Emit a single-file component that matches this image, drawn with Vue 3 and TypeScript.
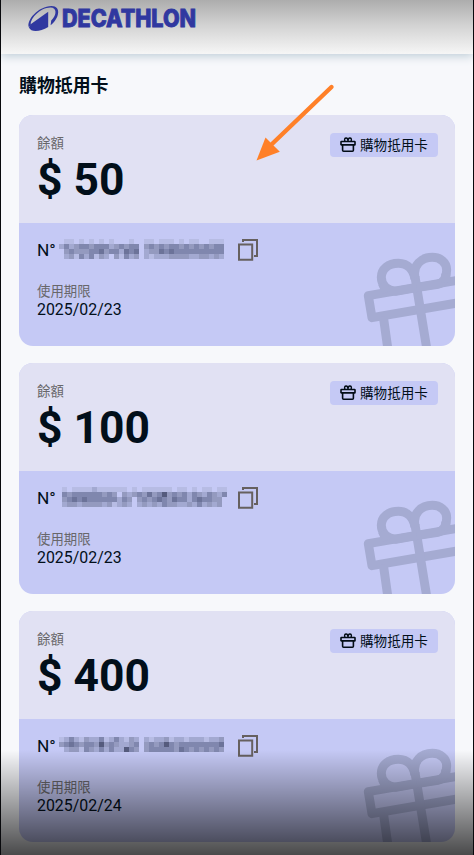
<script setup lang="ts">
interface Voucher {
  amount: string
  expiry: string
  shifted: boolean
  low: boolean
  tail: boolean
  mask: string[]
}

const vouchers: Voucher[] = [
  {
    amount: '$ 50',
    expiry: '2025/02/23',
    shifted: false,
    low: false,
    tail: true,
    mask: [
      '011010101010001001101110101100111',
      '242344344423434403434344343434344',
      '034333445344254502335454444444444',
      '023142413203142302122233332233232',
    ],
  },
  {
    amount: '$ 100',
    expiry: '2025/02/23',
    shifted: true,
    low: false,
    tail: false,
    mask: [
      '101111211111101011111101101011011',
      '434444443430323435346343424324324',
      '345454444442430343454354424544330',
      '233233332312320232324332232423230',
    ],
  },
  {
    amount: '$ 400',
    expiry: '2025/02/24',
    shifted: false,
    low: true,
    tail: false,
    mask: [
      '124213224124213202122312212221223',
      '345434436343223403434643444444445',
      '023314324242264303444443543434343',
    ],
  },
]

const shades = ['transparent', '#b7bce4', '#a3a9d1', '#949abf', '#8087ae', '#6c7399', '#555b7d']

function cells(mask: string[]) {
  return mask.flatMap((row, y) =>
    row.split('').map((level, x) => ({ x: x * 5, y: y * 5, fill: shades[Number(level)] })),
  )
}
</script>

<template>
  <div class="screen">
    <header class="topbar">
      <svg class="logo" width="200" height="40" viewBox="0 0 200 40">
        <g fill="#3038a0">
          <path d="M2.6 24.2L20.2 11.8V26.9C12 32 3 32.6 1 27.5Z" />
          <path
            d="M1 27.5C-2.2 20.5 10.5 6 23.5 6C33.5 6 31.6 18.5 22.6 25.2L23.2 20.6C29.5 14.6 28.6 7.5 22.5 7.6C12 7.8 2.6 18.3 2.8 24.2Z"
          />
          <text x="34" y="27" textLength="134" lengthAdjust="spacingAndGlyphs" class="wordmark">DECATHLON</text>
        </g>
      </svg>
    </header>

    <main class="content">
      <h1 class="title">購物抵用卡</h1>
      <article v-for="(v, i) in vouchers" :key="i" class="card">
        <div class="summary">
          <div class="balance">
            <span class="label">餘額</span>
            <strong class="amount">{{ v.amount }}</strong>
          </div>
          <div class="tag">
            <svg width="16" height="16" viewBox="0 0 16 16" fill="none" stroke="#020c16" stroke-width="1.6">
              <rect x="1" y="4.5" width="14" height="3.4" rx=".4" />
              <path d="M2.6 8V13.2Q2.6 14.2 3.6 14.2H12.4Q13.4 14.2 13.4 13.2V8" />
              <path d="M5.2 4.6C3.9 2.5 4.7 1 6.2 1C7.4 1 8 1.9 8 4.2C8 1.9 8.6 1 9.8 1C11.3 1 12.1 2.5 10.8 4.6" stroke-width="1.4" />
            </svg>
            <span>購物抵用卡</span>
          </div>
        </div>
        <div class="details">
          <svg class="gift" width="105" height="111" viewBox="0 0 315 333">
            <g fill="none" stroke="#a5abd2" stroke-width="27" stroke-linejoin="round">
              <path d="M340 133L55 182L66 248L340 201" />
              <path d="M100 245L114 345M195 125L231 345" />
              <path d="M200 158L137 169C108 165 94 148 94 127C94 102 115 85 145 85C175 85 191 108 195 132" />
              <path d="M200 158L264 148C281 142 290 125 290 105C290 81 270 67 247 67C215 67 187 90 195 128" />
              <path d="M97 145L110 172M287 115L288 143" />
            </g>
          </svg>
          <div class="number">
            <span class="prefix">N°</span>
            <svg class="mask" :class="{ shifted: v.shifted, low: v.low }" width="166" height="20" viewBox="0 0 166 20" shape-rendering="crispEdges">
              <path v-if="v.tail" d="M163 6Q167.5 10 163 15Z" fill="#06101d" />
              <rect v-for="(c, n) in cells(v.mask)" :key="n" :x="c.x" :y="c.y" width="5" height="5" :fill="c.fill" />
            </svg>
            <svg class="copy" width="20" height="22" viewBox="0 0 20 22" fill="none" stroke="#66605f" stroke-width="2">
              <path d="M1 5.5H14.2V20.8H1ZM5 3V1H19V17H16" />
            </svg>
          </div>
          <span class="label">使用期限</span>
          <time class="date">{{ v.expiry }}</time>
        </div>
      </article>
    </main>
    <svg class="pointer" width="80" height="80" viewBox="0 0 80 80">
      <path d="M76.5 5L17 62" stroke="#ff8028" stroke-width="4.4" stroke-linecap="round" />
      <path d="M1.5 78.5L10.5 55.5L24.8 69.8Z" fill="#ff8028" />
    </svg>
    <div class="fade"></div>
  </div>
</template>

<style>
body {
  margin: 0;
  overflow: hidden;
}
</style>

<style scoped>
.screen {
  position: relative;
  box-sizing: border-box;
  width: 474px;
  height: 855px;
  overflow: hidden;
  border-left: 1px solid #08090c;
  border-right: 1px solid #08090c;
  background: #f7f8fb;
  color: #020f1a;
  font-family: Roboto, "Noto Sans CJK TC", sans-serif;
}
.topbar {
  height: 54px;
  padding-left: 27px;
  background: linear-gradient(#adadad, #d2d2d2 46%, #f6f6f6);
  box-shadow: 0 2px 9px #bccbd5;
}
.logo {
  display: block;
  overflow: visible;
}
.wordmark {
  font: 800 23.8px Inter, sans-serif;
  stroke: #3038a0;
  stroke-width: 0.9px;
}
.content {
  display: flex;
  flex-direction: column;
  gap: 17.5px;
  padding: 18px 18px 0;
}
.title {
  height: 26px;
  margin: 0 0 -0.5px;
  font-size: 17.9px;
  line-height: 28px;
  font-weight: 700;
}
.card {
  flex: none;
  height: 230.5px;
  overflow: hidden;
  border-radius: 14px;
  background: #c5c9f5;
}
.summary {
  box-sizing: border-box;
  display: flex;
  justify-content: space-between;
  align-items: flex-start;
  height: 108px;
  padding: 18px 17.5px 0 18px;
  background: #e1e1f3;
}
.balance {
  display: flex;
  flex-direction: column;
}
.label {
  display: block;
  height: 20px;
  color: #68676a;
  font-size: 13.4px;
  line-height: 22px;
}
.amount {
  font-size: 44.4px;
  line-height: 54px;
  font-weight: 700;
}
.tag {
  display: flex;
  align-items: center;
  gap: 4px;
  box-sizing: border-box;
  width: 107.5px;
  height: 24px;
  padding-left: 10px;
  border-radius: 4px;
  background: #c5c9f5;
  font-size: 13.6px;
  line-height: 26px;
  white-space: nowrap;
}
.details {
  position: relative;
  box-sizing: border-box;
  height: 122.5px;
  padding: 16px 18px 0;
}
.gift {
  position: absolute;
  right: 0;
  bottom: 0;
}
.number {
  display: flex;
  height: 42px;
}
.prefix {
  width: 22px;
  font-size: 17.3px;
  line-height: 22px;
}
.mask.shifted {
  margin: 0 -3px 0 3px;
}
.mask.low {
  margin-top: 2px;
}
.copy {
  margin-left: 13px;
}
.date {
  display: block;
  font-size: 15.9px;
  line-height: 18px;
}
.pointer {
  position: absolute;
  left: 254px;
  top: 82px;
}
.fade {
  position: absolute;
  inset: 750px 0 0;
  background: linear-gradient(rgba(0, 0, 0, 0), rgba(0, 0, 0, 0.7));
}
</style>
